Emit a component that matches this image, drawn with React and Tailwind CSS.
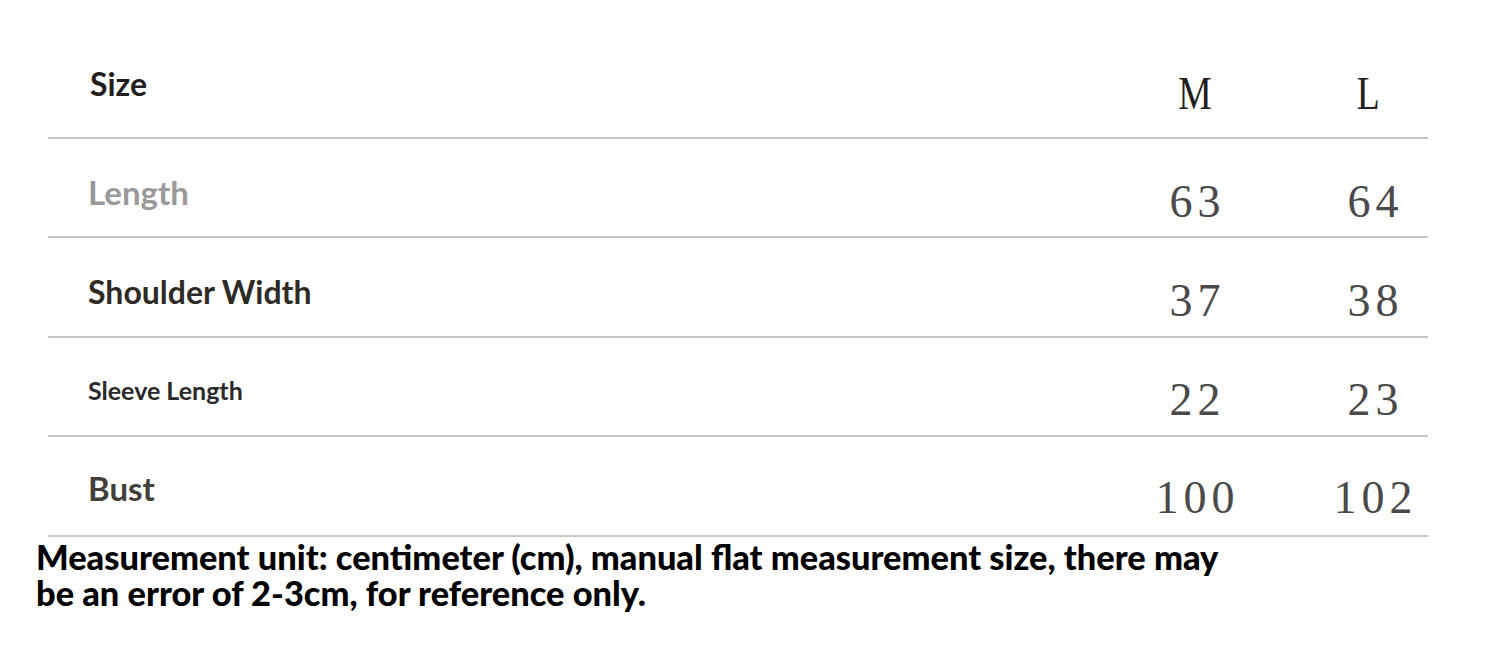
import React from "react";

const rows = [
  { label: "Length", m: "63", l: "64", color: "text-[#9a9a9a]", size: "text-[33px]", lpt: "pt-[37px]", npt: "pt-[40px]", h: "h-[99px]" },
  { label: "Shoulder Width", m: "37", l: "38", color: "text-[#2e2a26]", size: "text-[32px]", lpt: "pt-[38px]", npt: "pt-[40px]", h: "h-[100px]" },
  { label: "Sleeve Length", m: "22", l: "23", color: "text-[#2a2a2a]", size: "text-[25px]", lpt: "pt-[40px]", npt: "pt-[39px]", h: "h-[99px]" },
  { label: "Bust", m: "100", l: "102", color: "text-[#433f3b]", size: "text-[33px]", lpt: "pt-[35px]", npt: "pt-[38px]", h: "h-[100px]" },
];

const sans = "font-['Lato','Open_Sans',sans-serif]";
const serif = "font-['Liberation_Serif','Times_New_Roman',serif]";

export default function App() {
  return (
    <div className="w-[1500px] h-[667px] bg-white overflow-hidden">
      <div className="ml-[48px] w-[1380px]">
        <div className="grid grid-cols-[1fr_150px_110px] gap-x-[48px] h-[139px] border-b-2 border-[#c8c8c8]">
          <div className={`pl-[42px] pt-[68px] ${sans} font-bold text-[32px] leading-none text-[#231f20]`}>Size</div>
          <div className={`flex justify-center pt-[70px] ${serif} text-[47px] leading-none text-[#231f20]`}>
            <span className="inline-block scale-x-[0.8]">M</span>
          </div>
          <div className={`flex justify-center pt-[70px] pr-[10px] ${serif} text-[47px] leading-none text-[#231f20]`}>
            <span className="inline-block scale-x-[0.8]">L</span>
          </div>
        </div>
        {rows.map((r) => (
          <div key={r.label} className={`grid grid-cols-[1fr_150px_110px] gap-x-[48px] ${r.h} border-b-2 border-[#c8c8c8]`}>
            <div className={`pl-[40px] ${r.lpt} ${sans} font-bold ${r.size} leading-none ${r.color}`}>{r.label}</div>
            <div className={`flex justify-center ${r.npt} ${serif} text-[46px] leading-none tracking-[5px] text-[#4a4a4a]`}>
              <span className="mr-[-5px]">{r.m}</span>
            </div>
            <div className={`flex justify-center ${r.npt} ${serif} text-[46px] leading-none tracking-[5px] text-[#4a4a4a]`}>
              <span className="mr-[-5px]">{r.l}</span>
            </div>
          </div>
        ))}
      </div>
      <div className={`ml-[36px] mt-[2px] ${sans} font-black text-[34.4px] leading-[36px] text-black`}>
        <div>Measurement unit: centimeter (cm), manual flat measurement size, there may</div>
        <div>be an error of 2-3cm, for reference only.</div>
      </div>
    </div>
  );
}
